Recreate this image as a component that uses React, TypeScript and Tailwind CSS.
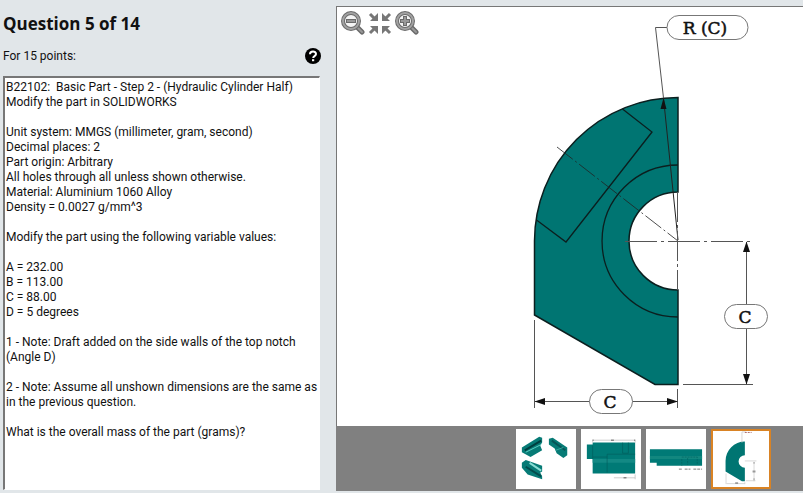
import { useState } from "react";

const QUESTION = `B22102:  Basic Part - Step 2 - (Hydraulic Cylinder Half)
Modify the part in SOLIDWORKS

Unit system: MMGS (millimeter, gram, second)
Decimal places: 2
Part origin: Arbitrary
All holes through all unless shown otherwise.
Material: Aluminium 1060 Alloy
Density = 0.0027 g/mm^3

Modify the part using the following variable values:

A = 232.00
B = 113.00
C = 88.00
D = 5 degrees

1 - Note: Draft added on the side walls of the top notch (Angle D)

2 - Note: Assume all unshown dimensions are the same as in the previous question.

What is the overall mass of the part (grams)?`;

function ZoomGlyph({ plus = false }: { plus?: boolean }) {
  return (
    <svg viewBox="0 0 24 24" className="size-6" fill="none" stroke="#6b6b6b">
      <path d="M16 16l5 5" strokeWidth="5" strokeLinecap="round" />
      <path d="M17 17l4 4" stroke="#999" strokeWidth="2" strokeLinecap="round" />
      <circle cx="10" cy="10" r="8" fill="#f4f4f4" strokeWidth="4" />
      <circle cx="10" cy="10" r="8" stroke="#a2a2a2" strokeWidth="2" />
      <path d={plus ? "M5 10h10M10 5v10" : "M5 10h10"} strokeWidth="4" />
      <path
        d={plus ? "M6 10h8M10 6v8" : "M6 10h8"}
        stroke="#999"
        strokeWidth="2"
      />
    </svg>
  );
}

function FitGlyph() {
  return (
    <svg viewBox="0 0 24 24" className="size-6" fill="#777" stroke="#777">
      <path d="M2 3l5 5M22 3l-5 5M2 22l5-5M22 22l-5-5" strokeWidth="3" />
      <path
        stroke="none"
        d="M10 2v8H2l3-3 2-2zM14 2v8h8l-3-3-2-2zM10 23v-8H2l3 3 2 2zM14 23v-8h8l-3 3-2 2z"
      />
    </svg>
  );
}

function HelpGlyph() {
  return (
    <svg viewBox="0 0 16 16" className="size-4">
      <circle cx="8" cy="8" r="8" fill="#000" />
      <path
        d="M5 6.200C5 2.600 11 2.600 11 6c0 2.200-2.800 2-2.800 4"
        fill="none"
        stroke="#fff"
        strokeWidth="2"
      />
      <path d="M7 11.200h2.200v2H7z" fill="#fff" />
    </svg>
  );
}

function Drawing() {
  return (
    <svg
      viewBox="337 7 466 419"
      preserveAspectRatio="xMidYMid meet"
      className="h-full w-full"
      role="img"
      aria-label="Front view of the cylinder half"
    >
      <path
        d="M678 97.500A143.500 143.500 0 0 0 534.500 241V315L655 384.500H678V290A49 49 0 0 1 678 192Z"
        fill="#007572"
        stroke="#0b1f1f"
        strokeWidth="1.500"
      />
      <g fill="none" stroke="#0b1f1f" strokeWidth="1.300">
        <path d="M678 165A76 76 0 0 0 678 317" />
        <path d="M622.500 109L652 132 566 242 536.500 220" />
      </g>
      <g fill="none" stroke="#555" strokeWidth="1">
        <path d="M667.500 27.500H655.500L663.500 98" />
        <path d="M663.500 98L678 240" stroke="#222" />
        <path
          d="M557 147L678 241"
          stroke="#222"
          strokeWidth="0.800"
          strokeDasharray="20 3 2 3"
        />
        <path d="M625 241.500H753" strokeDasharray="32 4 3 4" />
        <path d="M677.500 192V290" strokeDasharray="30 3 3 3" />
        <path d="M534.500 320V408M677.500 389V408M683 384.500H753" />
        <path d="M535 401.500H678M746.500 242V384" />
      </g>
      <path
        d="M663.500 98L660.500 109H666.500ZM746.500 241.500L743 252H750ZM746.500 384.500L743 374H750ZM534.500 401.500L545 398V405ZM678 401.500L667 398V405Z"
        fill="#111"
      />
      <g fill="#fff" stroke="#777">
        <rect x="667" y="15.500" width="81" height="24" rx="12" />
        <rect x="589.500" y="389.500" width="43" height="24" rx="12" />
        <rect x="724.500" y="304.500" width="43" height="24" rx="12" />
      </g>
      <g
        className="font-['DejaVu_Serif',serif] text-[17px]"
        fill="#111"
        stroke="#111"
        strokeWidth="0.500"
        textAnchor="middle"
      >
        <text x="705" y="34">R (C)</text>
        <text x="610" y="408">C</text>
        <text x="745" y="323">C</text>
      </g>
    </svg>
  );
}

function IsoThumb() {
  return (
    <svg viewBox="0 0 58 58" className="size-full">
      <path d="M4 17L22 6l3 1v5l-2 3 2 5-12 7-9-5z" fill="#077b76" />
      <path d="M7 20L24 10" stroke="#003f40" strokeWidth="2" />
      <path d="M8 22L24 14" stroke="#5ed0c4" strokeWidth="1" />
      <path d="M32 8l4-1 15 10v8l-4 3-7-5-2-5-6-4z" fill="#077b76" />
      <path d="M35 10l14 10" stroke="#075658" strokeWidth="2" />
      <path d="M39 20l8-3" stroke="#39a9a0" strokeWidth="1" />
      <path d="M4 33l4-3 3 1 14 5v6l-2 1 2 4v3L10 45l-6-7z" fill="#077b76" />
      <path d="M12 33l12 8" stroke="#89ded6" strokeWidth="2" />
      <path d="M8 37l16 10" stroke="#034c4d" strokeWidth="2" />
    </svg>
  );
}

function SideThumb() {
  return (
    <svg viewBox="0 0 58 58" className="size-full">
      <path d="M10 12H54V44H10V29H4V14h6z" fill="#007a76" />
      <path d="M10 29H54v4H10z" fill="#138984" />
      <path
        d="M10 27h15v16M25 27v-3h29M41 12v11h6V12M10 15v14"
        fill="none"
        stroke="#005b5b"
        strokeWidth="0.600"
      />
      <path d="M10 9.500H54M32 48.500H54" stroke="#ccc" />
      <path d="M10 9v3M54 9v3M54 45v5" stroke="#ccc" />
      <path d="M29 9.500h3M42 48.500h3M10 9.500h1M53 9.500h1" stroke="#555" />
    </svg>
  );
}

function TopThumb() {
  return (
    <svg viewBox="0 0 58 58" className="size-full">
      <path d="M2 19H56V36H9V33H2z" fill="#007a76" />
      <path d="M2 26H56v3H2z" fill="#12877f" />
      <path
        d="M35 29v7M35 27h16v8M41 28v7"
        fill="none"
        stroke="#005d5c"
        strokeWidth="0.600"
        strokeDasharray="2 1"
      />
      <path
        d="M32 39.500h3M38 39.500h6M47 39.500h9"
        stroke="#777"
        strokeDasharray="3 1"
      />
    </svg>
  );
}

function FrontThumb() {
  return (
    <svg viewBox="0 0 58 58" className="size-full">
      <path
        d="M33 11A20 20 0 0 0 13 31V42L30 52H33V38a6 6 0 0 1 0-13z"
        fill="#007572"
      />
      <path
        d="M30 12V1h4M33 31h12M42.500 32v20M13.500 44v11M33 53v2M14 54.500h19M34 51.500h10"
        fill="none"
        stroke="#ccc"
        strokeWidth="0.800"
      />
      <path d="M33 1.500h7" stroke="#a66" strokeDasharray="2 1" />
      <path d="M41 42h3M23 54h3M42 33h1M42 50h1" stroke="#999" strokeWidth="2" />
    </svg>
  );
}

const views = [
  { name: "Isometric views", Picture: IsoThumb },
  { name: "Side view", Picture: SideThumb },
  { name: "Top view", Picture: TopThumb },
  { name: "Front view", Picture: FrontThumb },
];

export default function App() {
  const [active, setActive] = useState(3);

  return (
    <main className="flex min-h-screen bg-[#e1e6e9] font-['Open_Sans','Noto_Sans',sans-serif] text-[#111]">
      <section className="flex w-84 flex-col pt-3 pr-4 pb-[3px] pl-[3px]">
        <h1 className="text-[17px] leading-6 font-bold">Question 5 of 14</h1>
        <div className="mt-3 flex items-center justify-between font-[Roboto,sans-serif]">
          <p className="text-xs">For 15 points:</p>
          <button type="button" aria-label="Help" className="-mr-px">
            <HelpGlyph />
          </button>
        </div>
        <textarea
          readOnly
          aria-label="Question"
          value={QUESTION}
          className="mt-3 w-full flex-1 resize-none overflow-hidden border-2 border-r border-b border-[#777] border-r-white border-b-white bg-white px-px py-0.5 font-[Roboto,sans-serif] text-xs leading-[15px] outline-none"
        />
      </section>

      <section className="flex flex-1 flex-col pt-[6px] pb-[2px]">
        <div className="relative flex-1 border-t border-l border-[#777] bg-white">
          <Drawing />
          <div className="absolute top-1 left-1 flex gap-[3px]">
            <button type="button" aria-label="Zoom out">
              <ZoomGlyph />
            </button>
            <button type="button" aria-label="Fit">
              <FitGlyph />
            </button>
            <button type="button" aria-label="Zoom in">
              <ZoomGlyph plus />
            </button>
          </div>
        </div>
        <div className="flex justify-end gap-[5px] bg-[#808080] pt-[3px] pr-8 pb-[2px]">
          {views.map(({ name, Picture }, i) => (
            <button
              key={name}
              type="button"
              aria-label={name}
              aria-pressed={active === i}
              onClick={() => setActive(i)}
              className={`size-[60px] border-2 bg-white ${
                active === i ? "border-[#d98324]" : "border-white"
              }`}
            >
              <Picture />
            </button>
          ))}
        </div>
      </section>
    </main>
  );
}
